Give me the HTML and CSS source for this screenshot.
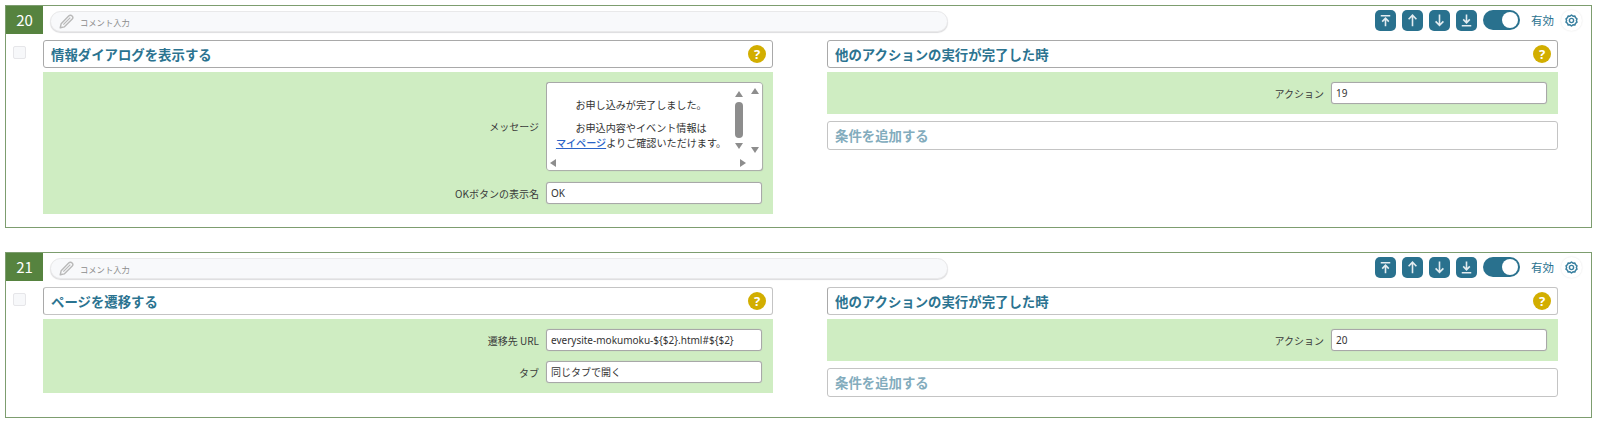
FILE: index.html
```html
<!DOCTYPE html>
<html lang="ja">
<head>
<meta charset="utf-8">
<title>アクション</title>
<link rel="stylesheet" href="styles.css">
</head>
<body>
<svg class="defs" width="0" height="0" aria-hidden="true">
  <defs>
    <g id="i-pencil"><path d="M1.5 16.5 L2.6 11.6 L11.6 2.4 C12.8 1.2 14.6 1.2 15.7 2.3 C16.8 3.4 16.8 5.2 15.6 6.4 L6.5 15.4 Z" fill="none" stroke="#b9b9b9" stroke-width="1.7" stroke-linejoin="round"/><path d="M5.2 12.8 L13.6 4.4" fill="none" stroke="#b9b9b9" stroke-width="1.5"/></g>
    <g id="i-top"><path d="M5.75 5.8H15.25M10.5 16.2V8.6M7.2 11.6 L10.5 8.2 L13.8 11.6" fill="none" stroke="#e3ecf0" stroke-width="1.6"/></g>
    <g id="i-up"><path d="M10.5 16.2V5.4M6.6 9.2 L10.5 5.2 L14.4 9.2" fill="none" stroke="#e3ecf0" stroke-width="1.6"/></g>
    <g id="i-down"><path d="M10.5 4.4V15.2M6.6 11.4 L10.5 15.4 L14.4 11.4" fill="none" stroke="#e3ecf0" stroke-width="1.6"/></g>
    <g id="i-bottom"><path d="M5.75 15.8H15.25M10.5 4.6V12.6M7.2 9.4 L10.5 12.8 L13.8 9.4" fill="none" stroke="#e3ecf0" stroke-width="1.6"/></g>
    <g id="i-gear"><path d="M10.5 5 L12 6.2 L13.9 6 L14.5 7.7 L16 8.8 L15.4 10.5 L16 12.2 L14.5 13.3 L13.9 15 L12 14.8 L10.5 16 L9 14.8 L7.1 15 L6.5 13.3 L5 12.2 L5.6 10.5 L5 8.8 L6.5 7.7 L7.1 6 L9 6.2 Z" fill="none" stroke="#3a80a0" stroke-width="1.5" stroke-linejoin="round"/><circle cx="10.5" cy="10.5" r="2.1" fill="none" stroke="#3a80a0" stroke-width="1.4"/></g>
  </defs>
</svg>

<section class="card">
  <header class="head">
    <div class="num">20</div>
    <div class="comment">
      <svg class="pencil" width="18" height="18" viewBox="0 0 18 18"><use href="#i-pencil"/></svg>
      <span>コメント入力</span>
    </div>
    <div class="tools">
      <button class="tool"><svg width="21" height="21" viewBox="0 0 21 21"><use href="#i-top"/></svg></button>
      <button class="tool"><svg width="21" height="21" viewBox="0 0 21 21"><use href="#i-up"/></svg></button>
      <button class="tool"><svg width="21" height="21" viewBox="0 0 21 21"><use href="#i-down"/></svg></button>
      <button class="tool"><svg width="21" height="21" viewBox="0 0 21 21"><use href="#i-bottom"/></svg></button>
      <span class="toggle"><span class="knob"></span></span>
      <span class="state">有効</span>
      <span class="gear"><svg width="21" height="21" viewBox="0 0 21 21"><use href="#i-gear"/></svg></span>
    </div>
  </header>
  <div class="body">
    <div class="check-col"><span class="check"></span></div>
    <div class="col">
      <div class="title"><span>情報ダイアログを表示する</span><span class="help">?</span></div>
      <div class="fields">
        <div class="row">
          <label class="label">メッセージ</label>
          <div class="message">
            <div class="message-text">
              <p>お申し込みが完了しました。</p>
              <p>お申込内容やイベント情報は<br><a href="#">マイページ</a>よりご確認いただけます。</p>
            </div>
            <span class="bar-thumb"></span>
            <span class="tri up inner-up"></span>
            <span class="tri down inner-down"></span>
            <span class="tri up outer-up"></span>
            <span class="tri down outer-down"></span>
            <span class="tri left h-left"></span>
            <span class="tri right h-right"></span>
          </div>
        </div>
        <div class="row">
          <label class="label">OKボタンの表示名</label>
          <div class="input">OK</div>
        </div>
      </div>
    </div>
    <div class="col">
      <div class="title"><span>他のアクションの実行が完了した時</span><span class="help">?</span></div>
      <div class="fields">
        <div class="row">
          <label class="label">アクション</label>
          <div class="input">19</div>
        </div>
      </div>
      <div class="add">条件を追加する</div>
    </div>
  </div>
</section>

<section class="card second">
  <header class="head">
    <div class="num">21</div>
    <div class="comment">
      <svg class="pencil" width="18" height="18" viewBox="0 0 18 18"><use href="#i-pencil"/></svg>
      <span>コメント入力</span>
    </div>
    <div class="tools">
      <button class="tool"><svg width="21" height="21" viewBox="0 0 21 21"><use href="#i-top"/></svg></button>
      <button class="tool"><svg width="21" height="21" viewBox="0 0 21 21"><use href="#i-up"/></svg></button>
      <button class="tool"><svg width="21" height="21" viewBox="0 0 21 21"><use href="#i-down"/></svg></button>
      <button class="tool"><svg width="21" height="21" viewBox="0 0 21 21"><use href="#i-bottom"/></svg></button>
      <span class="toggle"><span class="knob"></span></span>
      <span class="state">有効</span>
      <span class="gear"><svg width="21" height="21" viewBox="0 0 21 21"><use href="#i-gear"/></svg></span>
    </div>
  </header>
  <div class="body">
    <div class="check-col"><span class="check"></span></div>
    <div class="col">
      <div class="title"><span>ページを遷移する</span><span class="help">?</span></div>
      <div class="fields">
        <div class="row">
          <label class="label">遷移先 URL</label>
          <div class="input">everysite-mokumoku-${$2}.html#${$2}</div>
        </div>
        <div class="row">
          <label class="label">タブ</label>
          <div class="input">同じタブで開く</div>
        </div>
      </div>
    </div>
    <div class="col">
      <div class="title"><span>他のアクションの実行が完了した時</span><span class="help">?</span></div>
      <div class="fields">
        <div class="row">
          <label class="label">アクション</label>
          <div class="input">20</div>
        </div>
      </div>
      <div class="add">条件を追加する</div>
    </div>
  </div>
</section>
</body>
</html>
```
FILE: styles.css
```css
* { box-sizing: border-box; }
html, body { margin: 0; background: #fff; }
body {
  padding: 5px 8px 0 5px;
  font-family: "Noto Sans CJK JP", "Noto Sans", sans-serif;
  color: #3a3a3a;
}
.defs { position: absolute; }

.card { border: 1px solid #7d9d6f; height: 223px; }
.card.second { height: 166px; margin-top: 24px; }

.head { display: flex; height: 34px; align-items: flex-start; }
.num {
  width: 37px; height: 28px; flex: none;
  background: #56833f; color: #fff;
  font-size: 15px; line-height: 28px; text-align: center;
}
.comment {
  width: 898px; height: 21px; margin: 5px 0 0 7px; padding-left: 8px;
  display: flex; align-items: center; gap: 6px;
  background: #f8f9fb; border: 1px solid #e9e9ea; border-radius: 11px;
  box-shadow: 0 1px 1px #dcdcde;
  font-size: 8.3px; color: #8c8c8c;
}
.pencil { flex: none; width: 15px; height: 15px; }
.tools { margin-left: auto; display: flex; align-items: center; height: 28px; padding-right: 9px; }
.tool {
  width: 21px; height: 21px; padding: 0; margin-right: 6px; border: 0;
  background: #29718e; border-radius: 5px; display: block;
}
.tool svg { display: block; }
.toggle {
  width: 37px; height: 20px; border-radius: 10px; background: #29718e;
  display: flex; align-items: center; justify-content: flex-end; padding-right: 2px;
}
.knob { width: 16px; height: 16px; border-radius: 50%; background: #fff; }
.state { margin-left: 11px; font-size: 11.5px; color: #2b7390; width: 23px; white-space: nowrap; }
.gear {
  margin-left: 7px; width: 21px; height: 21px; border-radius: 50%; background: #fff;
  box-shadow: 0 0 2px #e4e4e4; display: block;
}
.gear svg { display: block; }

.body { display: grid; grid-template-columns: 37px 730px 785px; }
.col + .col { margin-left: 54px; }
.check-col { padding: 6px 0 0 7px; }
.check {
  display: block; width: 13px; height: 13px;
  background: #f7f8fa; border: 1px solid #e6e6e9; border-radius: 2px;
}
.title {
  height: 28px; padding: 0 6px 0 7px;
  display: flex; align-items: center; justify-content: space-between;
  border: 1px solid #a9a9a9; border-radius: 3px; background: #fff;
  font-size: 13.4px; font-weight: 700; color: #2b7390;
}
.second .title { border-color: #c4c4c4; border-left-color: #a9a9a9; }
.help {
  width: 18px; height: 18px; border-radius: 50%; background: #d2ae00; color: #fff;
  font-family: "Noto Sans", sans-serif; font-size: 13px; font-weight: 700; line-height: 18px; text-align: center;
}
.fields {
  margin-top: 4px; padding: 10px 11px;
  display: flex; flex-direction: column; gap: 12px;
  background: #cfedc2;
}
.second .fields { gap: 10px; }
.row { display: flex; justify-content: flex-end; align-items: center; gap: 7px; }
.label { font-size: 10px; color: #3a3a3a; white-space: nowrap; }
.input {
  width: 216px; height: 22px; padding: 0 4px; line-height: 20px;
  background: #fff; border: 1px solid #a8a8a8; border-radius: 3px;
  box-shadow: 0 0 1px #b8b8b8;
  font-size: 10px; color: #333;
  font-family: "Noto Sans", "Noto Sans CJK JP", sans-serif;
}
.add {
  margin-top: 7px; height: 29px; padding-left: 7px; line-height: 27px;
  background: #fff; border: 1px solid #c4c4c4; border-radius: 3px;
  font-size: 13.4px; font-weight: 700; color: #83acbd;
}
.message {
  position: relative; width: 216px; height: 88px; background: #fff;
  border-top: 1px solid #a8a8a8; border-left: 1px solid #a8a8a8;
  border-radius: 3px; box-shadow: 1px 1px 1px #a8a8a8; overflow: hidden;
}
.message-text { width: 188px; padding-top: 14px; text-align: center; font-size: 10.1px; line-height: 15px; color: #333; }
.message-text p { margin: 0 0 8px; }
.message-text a { color: #2a63c7; font-weight: 500; }
.bar-thumb { position: absolute; left: 188px; top: 19px; width: 8px; height: 36px; border-radius: 4px; background: #8d8d8d; }
.tri { position: absolute; width: 0; height: 0; border: 4px solid transparent; }
.tri.up { border-top: 0; border-bottom: 6px solid #8d8d8d; }
.tri.down { border-bottom: 0; border-top: 6px solid #8d8d8d; }
.tri.left { border-left: 0; border-right: 6px solid #8d8d8d; }
.tri.right { border-right: 0; border-left: 6px solid #8d8d8d; }
.inner-up { left: 188px; top: 8px; }
.inner-down { left: 188px; top: 60px; }
.outer-up { left: 204px; top: 5px; }
.outer-down { left: 204px; top: 64px; }
.h-left { left: 3px; top: 76px; }
.h-right { left: 193px; top: 76px; }
```
